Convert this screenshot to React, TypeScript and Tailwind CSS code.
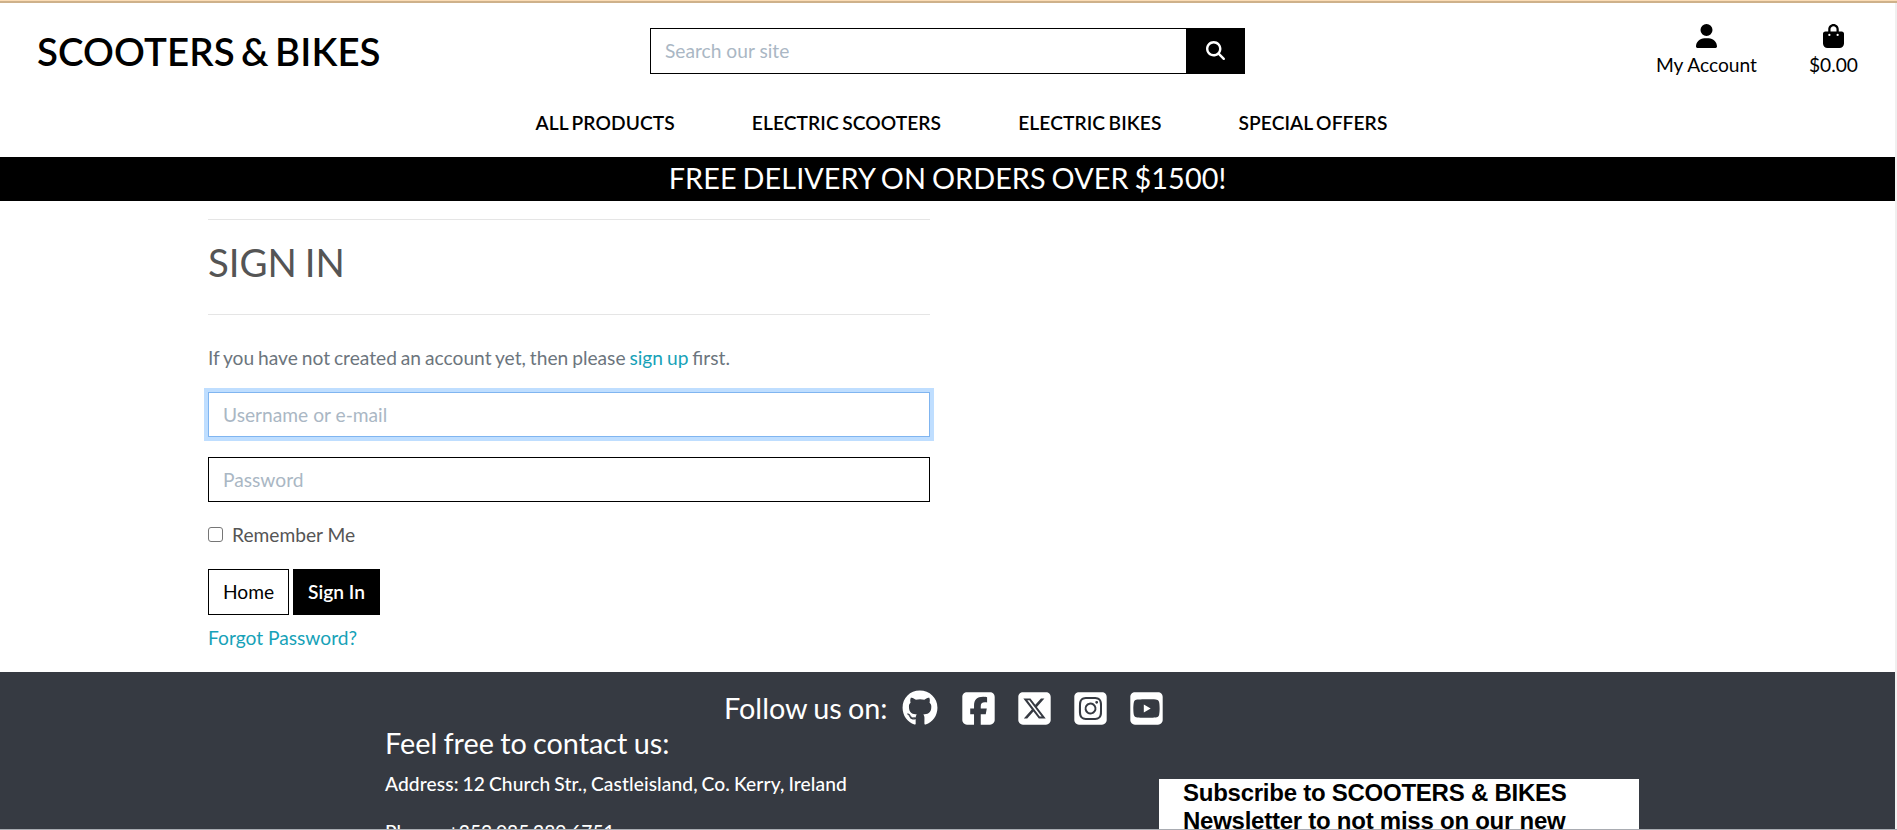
import React from "react";
import {
  FaUser,
  FaBagShopping,
  FaMagnifyingGlass,
  FaGithub,
  FaSquareFacebook,
  FaSquareXTwitter,
  FaSquareInstagram,
  FaSquareYoutube,
} from "react-icons/fa6";

function Header() {
  return (
    <header className="flex h-[154px] flex-col text-black">
      <div className="grid h-[89px] grid-cols-3">
        <div className="pl-[37px] pt-[24px]">
          <h2 className="whitespace-nowrap text-[38.4px] font-semibold leading-[48px] tracking-[0.1px] [word-spacing:-3.3px]">
            SCOOTERS &amp; BIKES
          </h2>
        </div>
        <div className="flex justify-center pt-[25px]">
          <form className="flex h-[46px] w-[595px]">
            <input
              className="min-w-0 flex-1 border border-black px-[14px] text-[19.2px] placeholder:text-[#aab7c4]"
              placeholder="Search our site"
            />
            <button type="button" className="flex w-[58px] items-center justify-center bg-black pb-[2px] text-white">
              <FaMagnifyingGlass className="h-[19px] w-[19px]" />
            </button>
          </form>
        </div>
        <div className="flex justify-end gap-[52px] pr-[37px] pt-[21px] text-[19.2px] leading-[29px]">
          <a className="flex flex-col items-center gap-[2px]">
            <FaUser className="h-[24px] w-[21px]" />
            <span>My Account</span>
          </a>
          <a className="flex flex-col items-center gap-[2px]">
            <FaBagShopping className="h-[24px] w-[21px]" />
            <span>$0.00</span>
          </a>
        </div>
      </div>
      <nav className="flex justify-center gap-[77px] pl-[28px] pt-[16px] text-[19.2px] font-semibold leading-[29px] tracking-[0.08px] [word-spacing:-1.5px]">
        <a>ALL PRODUCTS</a>
        <a>ELECTRIC SCOOTERS</a>
        <a>ELECTRIC BIKES</a>
        <a>SPECIAL OFFERS</a>
      </nav>
    </header>
  );
}

function SignIn() {
  return (
    <main className="h-[471px] pl-[208px] pt-[18px] text-[19.2px] text-[#555]">
      <div className="w-[722px]">
        <hr className="border-[#e5e5e5]" />
        <h2 className="pt-[18px] text-[38.4px] leading-[48px] [word-spacing:-2px]">SIGN IN</h2>
        <hr className="mt-[28px] border-[#e5e5e5]" />
        <p className="mt-[28px] leading-[29px] text-[#6c757d] [word-spacing:-1px]">
          If you have not created an account yet, then please <a className="text-[#17a2b8]">sign up</a> first.
        </p>
        <input
          className="mt-[20px] block h-[45px] w-full border border-[#80b5f0] px-[14px] pb-px shadow-[0_0_0_4px_#bfdeff] placeholder:text-[#aab7c4]"
          placeholder="Username or e-mail"
        />
        <input
          className="mt-[20px] block h-[45px] w-full border border-black px-[14px] pb-px placeholder:text-[#aab7c4]"
          placeholder="Password"
        />
        <label className="mt-[18px] flex items-center leading-[29px]">
          <span className="h-[15px] w-[15px] rounded-[3px] border border-[#767676] bg-white" />
          <span className="ml-[9px]">Remember Me</span>
        </label>
        <div className="mt-[20px] flex h-[46px] gap-1">
          <button className="w-[81px] border border-black text-black">Home</button>
          <button className="w-[87px] bg-black font-semibold text-white">Sign In</button>
        </div>
        <a className="mt-[8px] block leading-[29px] text-[#17a2b8]">Forgot Password?</a>
      </div>
    </main>
  );
}

function Footer() {
  return (
    <footer className="h-[157px] overflow-hidden bg-[#363a42] pt-[18px] text-white">
      <div className="flex h-[36px] items-center pl-[724px] text-[28.8px]">
        <span className="pt-px [word-spacing:-1.2px]">Follow us on:</span>
        <FaGithub className="ml-[14px] h-[36px] w-[36px]" />
        <FaSquareFacebook className="ml-[22px] h-[37px] w-[37px]" />
        <FaSquareXTwitter className="ml-[19px] h-[37px] w-[37px]" />
        <FaSquareInstagram className="ml-[19px] h-[37px] w-[37px]" />
        <FaSquareYoutube className="ml-[19px] h-[37px] w-[37px]" />
      </div>
      <div className="flex">
        <div className="w-[774px] shrink-0 pl-[385px]">
          <h4 className="-mt-px text-[28.8px] leading-[36px] [word-spacing:-1.1px]">Feel free to contact us:</h4>
          <p className="mt-[8px] whitespace-nowrap text-[19.2px] font-medium leading-[29px] tracking-[0.1px] [word-spacing:-1px]">
            Address: 12 Church Str., Castleisland, Co. Kerry, Ireland
          </p>
          <p className="mt-[19px] whitespace-nowrap text-[19.2px] font-medium leading-[29px] [word-spacing:-1.1px]">
            Phone: +353 085 289 6751
          </p>
        </div>
        <div className="ml-[385px] mt-[53px] h-[200px] w-[480px] bg-white pl-[24px] font-['Liberation_Sans',sans-serif] text-[24px] font-bold leading-[28px] tracking-[-0.25px] text-black">
          <div>Subscribe to SCOOTERS &amp; BIKES</div>
          <div>Newsletter to not miss on our new</div>
        </div>
      </div>
    </footer>
  );
}

export default function App() {
  return (
    <div className="h-[830px] overflow-hidden bg-white font-[Lato,sans-serif]">
      <div className="h-px bg-[#fbdcb5]" />
      <div className="h-[2px] bg-[#ceb18b]" />
      <div className="h-[826px] w-full border-r-2 border-[#f0f0f0]">
        <Header />
        <div className="h-[44px] bg-black text-center text-[28.8px] leading-[42px] tracking-[0.08px] text-white [word-spacing:-1.5px]">
          FREE DELIVERY ON ORDERS OVER $1500!
        </div>
        <SignIn />
        <Footer />
      </div>
      <div className="h-px bg-[#a9acb2]" />
    </div>
  );
}
